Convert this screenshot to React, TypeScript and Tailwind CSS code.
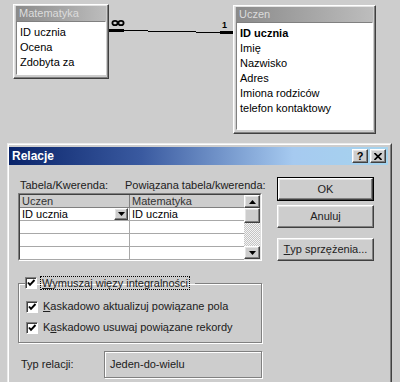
import React from "react";

const raised =
  "border border-t-white border-l-white border-r-[#404040] border-b-[#404040] shadow-[inset_-1px_-1px_0_#808080,inset_1px_1px_0_#e4e4e4]";
const sunken =
  "border border-t-[#808080] border-l-[#808080] border-r-white border-b-white";
const etched =
  "border border-[#808080] shadow-[1px_1px_0_#fff,inset_1px_1px_0_#fff]";

function TableBox({
  title,
  fields,
  className,
}: {
  title: string;
  fields: string[];
  className: string;
}) {
  return (
    <div className={`absolute flex flex-col px-[2px] pt-[1px] pb-[3px] ${raised} ${className}`}>
      <div className="h-[15px] shrink-0 bg-[linear-gradient(to_right,#8a8a8a,#bdbdbd)] pl-[3px] text-[11px] leading-[15px] text-[#dcdcdc]">
        {title}
      </div>
      <div className={`flex-1 bg-white pt-[3px] pl-[3px] ${sunken}`}>
        {fields.map((f, i) => (
          <div key={f} className={`h-[15px] leading-[15px] ${i === 0 && title === "Uczen" ? "font-bold" : ""}`}>
            {f}
          </div>
        ))}
      </div>
    </div>
  );
}

function Check() {
  return (
    <span className="flex h-[12px] w-[12px] shrink-0 items-center justify-center bg-white border border-t-[#808080] border-l-[#808080] border-r-white border-b-white shadow-[inset_1px_1px_0_#404040]">
      <svg width="10" height="10" viewBox="0 0 10 10">
        <path d="M2 4.5 L4 6.8 L8.5 2" stroke="#000" strokeWidth="1.9" fill="none" />
      </svg>
    </span>
  );
}

function Button({ children, def }: { children: React.ReactNode; def?: boolean }) {
  const inner = (
    <div className={`flex h-full w-full items-center justify-center text-[11px] text-[#222] ${raised}`}>
      {children}
    </div>
  );
  return def ? <div className="h-[24px] border border-black">{inner}</div> : <div className="h-[23px]">{inner}</div>;
}

export default function App() {
  return (
    <div
      className="relative h-[382px] w-[400px] overflow-hidden bg-[#cdcdcd] text-[11px] text-black"
      style={{ fontFamily: '"Liberation Sans", Arial, sans-serif' }}
    >
      {/* relationship diagram */}
      <div className="relative h-[143px]">
        <TableBox
          title="Matematyka"
          fields={["ID ucznia", "Ocena", "Zdobyta za"]}
          className="left-[13px] top-[4px] h-[75px] w-[96px]"
        />
        <TableBox
          title="Uczen"
          fields={["ID ucznia", "Imię", "Nazwisko", "Adres", "Imiona rodziców", "telefon kontaktowy"]}
          className="left-[233px] top-[5px] h-[129px] w-[143px]"
        />
        <svg className="absolute left-0 top-0" width="400" height="60">
          <rect x="109" y="29" width="15" height="3" fill="#000" />
          <line x1="124" y1="30.5" x2="148" y2="30.5" stroke="#000" />
          <line x1="148" y1="31.5" x2="196" y2="31.5" stroke="#000" />
          <line x1="196" y1="32.5" x2="220" y2="32.5" stroke="#000" />
          <rect x="220" y="31" width="13" height="3" fill="#000" />
          <ellipse cx="115" cy="23" rx="2.6" ry="2.2" stroke="#000" strokeWidth="1.8" fill="none" />
          <ellipse cx="121" cy="23" rx="2.6" ry="2.2" stroke="#000" strokeWidth="1.8" fill="none" />
          <text x="222" y="28" fontSize="9" fontWeight="bold" fontFamily="Liberation Sans, Arial, sans-serif">
            1
          </text>
        </svg>
      </div>

      {/* dialog */}
      <div className="ml-[7px] h-[239px] w-[385px] border-t border-l border-[#ececec] border-r border-r-[#404040]">
        <div className="h-full border-t border-l border-white border-r border-r-[#808080] pt-[2px]">
          <div className="mr-[2px] flex h-[18px] items-center bg-[linear-gradient(to_right,#0a246a,#3a5aa0_35%,#a6caf0_75%,#a6d4ee)] pl-[3px] pr-[2px]">
            <span className="flex-1 text-[12px] font-bold text-white">Relacje</span>
            <div className={`flex h-[14px] w-[16px] items-center justify-center bg-[#cdcdcd] text-[11px] font-bold leading-none ${raised}`}>
              ?
            </div>
            <div className={`ml-[2px] flex h-[14px] w-[16px] items-center justify-center bg-[#cdcdcd] ${raised}`}>
              <svg width="8" height="7" viewBox="0 0 8 7">
                <path d="M0.5 0 L7.5 7 M7.5 0 L0.5 7" stroke="#000" strokeWidth="1.6" />
              </svg>
            </div>
          </div>

          <div className="flex pl-[9px]">
            {/* left column */}
            <div className="w-[244px]">
              <div className="mt-[14px] flex h-[13px] whitespace-nowrap leading-[13px] text-[#202020]">
                <span className="ml-[2px] w-[105px] shrink-0">Tabela/Kwerenda:</span>
                <span className="whitespace-nowrap">Powiązana tabela/kwerenda:</span>
              </div>

              {/* grid */}
              <div className={`mt-px h-[68px] ${sunken}`}>
                <div className="flex h-full border border-t-[#404040] border-l-[#404040] border-r-[#dfdfdf] border-b-[#dfdfdf]">
                  <div className="flex-1">
                    <div className="flex h-[13px] border-b border-[#808080] bg-[#cdcdcd] leading-[12px] text-[#333]">
                      <div className="w-[110px] border-r border-[#808080] pl-[2px]">Uczen</div>
                      <div className="flex-1 pl-[2px]">Matematyka</div>
                    </div>
                    {[0, 1, 2, 3].map((r) => (
                      <div key={r} className="flex h-[13px] border-b border-[#a8a8a8] bg-white leading-[12px]">
                        <div className="flex w-[110px] items-center border-r border-[#a8a8a8] pl-[2px]">
                          {r === 0 && (
                            <>
                              <span className="flex-1">ID ucznia</span>
                              <span className={`mr-[1px] flex h-[12px] w-[14px] items-center justify-center bg-[#cdcdcd] ${raised}`}>
                                <svg width="7" height="4" viewBox="0 0 7 4">
                                  <path d="M0 0 H7 L3.5 4 Z" fill="#000" />
                                </svg>
                              </span>
                            </>
                          )}
                        </div>
                        <div className="flex-1 pl-[2px]">{r === 0 ? "ID ucznia" : ""}</div>
                      </div>
                    ))}
                  </div>
                  {/* scrollbar */}
                  <div className="flex w-[16px] flex-col">
                    <div className={`flex h-[13px] items-center justify-center bg-[#cdcdcd] ${raised}`}>
                      <svg width="7" height="4" viewBox="0 0 7 4">
                        <path d="M0 4 H7 L3.5 0 Z" fill="#000" />
                      </svg>
                    </div>
                    <div className={`h-[15px] bg-[#cdcdcd] ${raised}`} />
                    <div className="flex-1 bg-[repeating-conic-gradient(#f4f4f4_0_25%,#c4c4c4_0_50%)] bg-[length:2px_2px]" />
                    <div className={`flex h-[13px] items-center justify-center bg-[#cdcdcd] ${raised}`}>
                      <svg width="7" height="4" viewBox="0 0 7 4">
                        <path d="M0 0 H7 L3.5 4 Z" fill="#000" />
                      </svg>
                    </div>
                  </div>
                </div>
              </div>

              {/* group box */}
              <fieldset className={`mt-[15px] pb-[4px] ${etched}`}>
                <legend className="ml-[6px] flex items-center pr-[5px]">
                  <Check />
                  <span className="ml-[3px] border border-dotted border-black px-[1px] leading-[12px] text-[#202020]">
                    <span className="underline">W</span>ymuszaj więzy integralności
                  </span>
                </legend>
                <div className="mt-[6px] pl-[7px] text-[#202020]">
                  <div className="flex h-[21px] items-center">
                    <Check />
                    <span className="ml-[5px]">
                      <span className="underline">K</span>askadowo aktualizuj powiązane pola
                    </span>
                  </div>
                  <div className="flex h-[21px] items-center">
                    <Check />
                    <span className="ml-[5px]">
                      K<span className="underline">a</span>skadowo usuwaj powiązane rekordy
                    </span>
                  </div>
                </div>
              </fieldset>

              <div className="mt-[8px] flex h-[27px] items-center text-[#202020]">
                <span className="w-[86px] pl-[3px]">Typ relacji:</span>
                <div className={`flex h-full flex-1 items-center pl-[5px] ${etched}`}>Jeden-do-wielu</div>
              </div>
            </div>

            {/* right column */}
            <div className="ml-[15px] mt-[12px] w-[97px]">
              <Button def>OK</Button>
              <div className="mt-[4px]">
                <Button>Anuluj</Button>
              </div>
              <div className="mt-[10px]">
                <Button>
                  <span className="underline">T</span>yp sprzężenia...
                </Button>
              </div>
            </div>
          </div>
        </div>
      </div>
    </div>
  );
}
